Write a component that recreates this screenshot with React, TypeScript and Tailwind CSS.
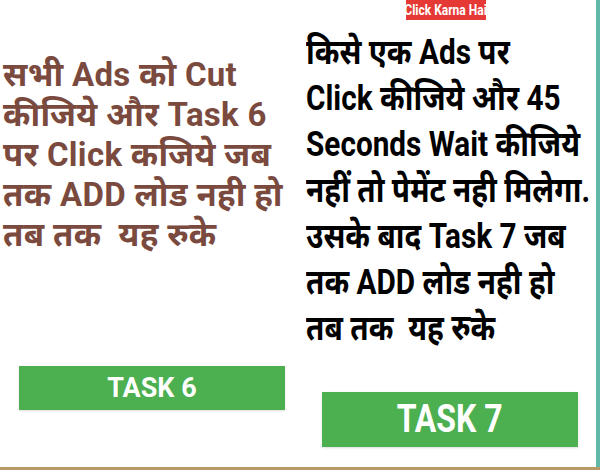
import React from "react";

export default function App() {
  const left = ["सभी Ads को Cut", "कीजिये और Task 6", "पर Click कजिये जब", "तक ADD लोड नही हो", "तब तक  यह रुके"];
  const right = [
    "किसे एक Ads पर",
    "Click कीजिये और 45",
    "Seconds Wait कीजिये",
    "नहीं तो पेमेंट नही मिलेगा.",
    "उसके बाद Task 7 जब",
    "तक ADD लोड नही हो",
    "तब तक  यह रुके",
  ];
  return (
    <div className="w-[600px] h-[470px] flex flex-col bg-white overflow-hidden">
      <div className="flex flex-1 min-h-0">
        <div className="w-[300px] flex flex-col bg-white" style={{ fontFamily: "Roboto, 'Noto Sans', sans-serif" }}>
          <div className="pt-[55px] pl-[3px] flex flex-col">
            {left.map((l, i) => (
              <div key={i} className="text-[33px] leading-[40px] font-bold text-[#7a4a3e] whitespace-pre tracking-[0.3px]">{l}</div>
            ))}
          </div>
          <div className="mt-auto mb-[57px] ml-[19px] w-[266px] h-[44px] bg-[#4caf50] shadow-sm flex items-center justify-center">
            <span className="text-white text-[27px] font-bold">TASK 6</span>
          </div>
        </div>
        <div className="w-[296px] flex flex-col bg-white" style={{ fontFamily: "Roboto, 'Noto Sans', sans-serif" }}>
          <div className="flex justify-center pr-[4px]">
            <div className="bg-[#e53935] h-[20px] w-[80px] flex items-center justify-center overflow-hidden">
              <span className="text-white text-[15px] font-bold whitespace-nowrap scale-x-[0.8]">Click Karna Hai</span>
            </div>
          </div>
          <div className="pl-[6px] pt-[10px] flex flex-col">
            {right.map((l, i) => (
              <div key={i} className="text-[35px] leading-[46px] font-bold text-black whitespace-pre origin-left scale-x-[0.85]">{l}</div>
            ))}
          </div>
          <div className="mt-auto mb-[20px] ml-[22px] w-[256px] h-[55px] bg-[#4caf50] shadow-sm flex items-center justify-center">
            <span className="text-white text-[39px] font-bold scale-x-[0.82]">TASK 7</span>
          </div>
        </div>
        <div className="w-[4px] bg-[#5fb8a8]" />
      </div>
      <div className="h-[3px] bg-[#b89a6a]" />
    </div>
  );
}
